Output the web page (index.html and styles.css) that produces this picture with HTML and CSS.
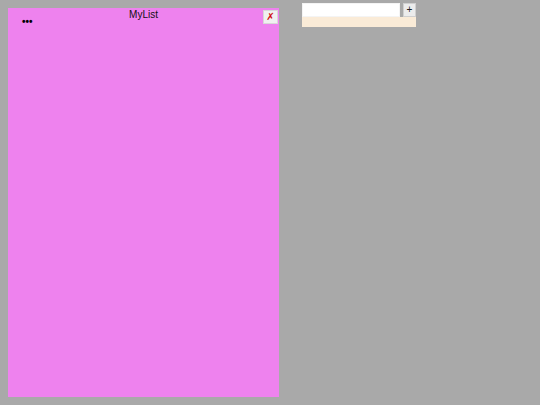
FILE: index.html
```html
<!DOCTYPE html>
<html>
<head>
<meta charset="utf-8">
<link rel="stylesheet" href="styles.css">
</head>
<body>
<div class="page">
  <section class="list-panel">
    <header class="list-header">
      <span class="menu-dots">•••</span>
      <h1 class="list-title">MyList</h1>
      <button class="close-btn" type="button">✗</button>
    </header>
  </section>
  <aside class="adder">
    <div class="adder-row">
      <input class="adder-input" type="text">
      <button class="add-btn" type="button">+</button>
    </div>
    <div class="adder-tray"></div>
  </aside>
</div>
</body>
</html>
```

FILE: styles.css
```css
html, body {
  margin: 0;
  padding: 0;
  background: #a9a9a9;
  font-family: "Liberation Sans", Arial, sans-serif;
}
.page {
  display: flex;
  align-items: flex-start;
  height: 405px;
}
.list-panel {
  margin: 8px 0 0 8px;
  width: 271px;
  height: 389px;
  background: #ee82ee;
}
.list-header {
  display: grid;
  grid-template-columns: 1fr auto 1fr;
  align-items: start;
}
.menu-dots {
  justify-self: start;
  margin: 8px 0 0 14px;
  font-size: 10px;
  line-height: 12px;
  color: #000;
  font-weight: bold;
}
.list-title {
  margin: 1px 0 0 0;
  font-size: 10px;
  line-height: 12px;
  font-weight: normal;
  color: #111;
}
.close-btn {
  justify-self: end;
  margin: 2px 1px 0 0;
  width: 15px;
  height: 14px;
  padding: 0;
  border: 1px solid #d8d8d8;
  background: #f0f0f0;
  color: #d01010;
  font-size: 10px;
  line-height: 12px;
  font-family: "DejaVu Sans", sans-serif;
}
.adder {
  margin: 3px 0 0 23px;
  width: 114px;
}
.adder-row {
  display: flex;
  gap: 3px;
}
.adder-input {
  box-sizing: border-box;
  width: 98px;
  height: 14px;
  margin: 0;
  padding: 0 2px;
  border: 1px solid #f4f4f4;
  background: #fff;
  outline: none;
}
.add-btn {
  box-sizing: border-box;
  width: 13px;
  height: 14px;
  margin: 0;
  padding: 0;
  border: 1px solid #d0d0d0;
  background: #ececec;
  color: #222;
  font-size: 10px;
  line-height: 12px;
  font-family: "Liberation Sans", Arial, sans-serif;
}
.adder-tray {
  height: 10px;
  background: #faebd7;
}
```
